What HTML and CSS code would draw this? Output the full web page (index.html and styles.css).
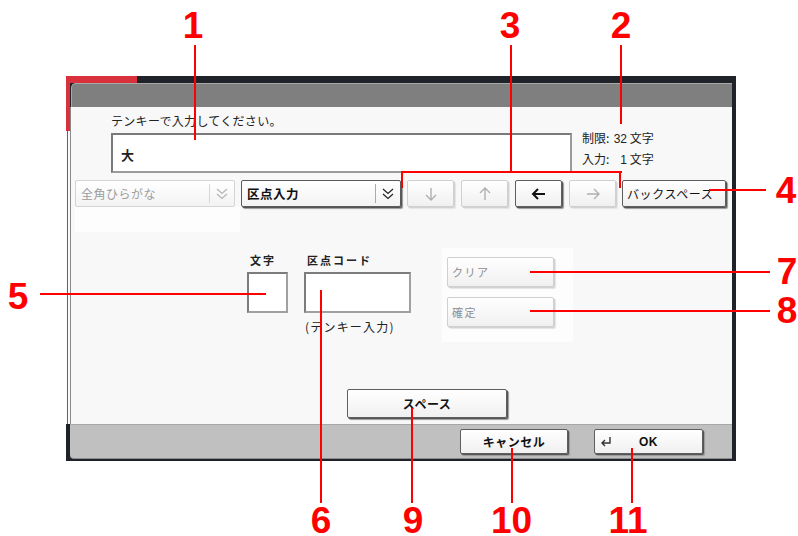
FILE: index.html
```html
<!DOCTYPE html>
<html lang="ja">
<head>
<meta charset="UTF-8" />
<title>区点入力</title>
<link rel="stylesheet" href="styles.css">
</head>
<body>
<div class="page">
  <div class="frame">
    <div class="titlebar"></div>
    <div class="panel">
      <p class="prompt">テンキーで入力してください。</p>
      <div class="entry-row">
        <div class="entry">大</div>
        <div class="limit">
          <div><span class="lbl">制限:</span><span class="num">32</span> 文字</div>
          <div><span class="lbl">入力:</span><span class="num">1</span> 文字</div>
        </div>
      </div>

      <div class="controls">
        <div class="select is-disabled">
          <span class="select-text">全角ひらがな</span>
          <span class="chev"><svg width="14" height="14" viewBox="0 0 14 14"><polyline points="2,2 7,6.5 12,2" /><polyline points="2,7 7,11.5 12,7" /></svg></span>
        </div>
        <div class="select is-active">
          <span class="select-text">区点入力</span>
          <span class="chev"><svg width="14" height="14" viewBox="0 0 14 14"><polyline points="2,2 7,6.5 12,2" /><polyline points="2,7 7,11.5 12,7" /></svg></span>
        </div>
        <button class="btn arrow"><svg width="16" height="16" viewBox="0 0 16 16"><path d="M8 2V14M3 9L8 14L13 9" /></svg></button>
        <button class="btn arrow"><svg width="16" height="16" viewBox="0 0 16 16"><path d="M8 14V2M3 7L8 2L13 7" /></svg></button>
        <button class="btn btn-dark arrow"><svg width="16" height="16" viewBox="0 0 16 16"><path d="M14 8H2M7 3L2 8L7 13" /></svg></button>
        <button class="btn arrow"><svg width="16" height="16" viewBox="0 0 16 16"><path d="M2 8H14M9 3L14 8L9 13" /></svg></button>
        <button class="btn btn-dark backspace">バックスペース</button>
      </div>

      <div class="middle">
        <div class="blank"></div>
        <div class="fields">
          <div class="field">
            <div class="field-label">文字</div>
            <div class="field-box box-char"></div>
          </div>
          <div class="field">
            <div class="field-label">区点コード</div>
            <div class="field-box box-code"></div>
            <div class="field-note">(テンキー入力)</div>
          </div>
        </div>
        <div class="side">
          <button class="btn side-btn">クリア</button>
          <button class="btn side-btn">確定</button>
        </div>
      </div>

      <div class="space-row">
        <button class="btn btn-dark space">スペース</button>
      </div>
    </div>
    <div class="footer">
      <button class="btn btn-dark foot-btn">キャンセル</button>
      <button class="btn btn-dark foot-btn ok">
        <svg class="enter" width="14" height="12" viewBox="0 0 14 12"><path d="M11 1V7H3M6 4L3 7L6 10" /></svg>
        <span>OK</span>
      </button>
    </div>
  </div>

  <!-- callouts -->
  <div class="line l1"></div>
  <div class="line l2"></div>
  <div class="line l3v"></div>
  <div class="line l3h"></div>
  <div class="line l3a"></div>
  <div class="line l3b"></div>
  <div class="line l4"></div>
  <div class="line l5"></div>
  <div class="line l6"></div>
  <div class="line l7"></div>
  <div class="line l8"></div>
  <div class="line l9"></div>
  <div class="line l10"></div>
  <div class="line l11"></div>

  <div class="num-tag n1">1</div>
  <div class="num-tag n2">2</div>
  <div class="num-tag n3">3</div>
  <div class="num-tag n4">4</div>
  <div class="num-tag n5">5</div>
  <div class="num-tag n6">6</div>
  <div class="num-tag n7">7</div>
  <div class="num-tag n8">8</div>
  <div class="num-tag n9">9</div>
  <div class="num-tag n10">10</div>
  <div class="num-tag n11">11</div>
</div>
</body>
</html>
```

FILE: styles.css
```css
* {
  box-sizing: border-box;
}
body {
  margin: 0;
  background: #fff;
  font-family: "Noto Sans CJK JP", "Liberation Sans", sans-serif;
  color: #222;
}
.page {
  position: relative;
  width: 798px;
  height: 536px;
  overflow: hidden;
  padding: 76px 0 0 66px;
}
.frame {
  width: 670px;
  height: 385px;
  padding: 7px 4px 2px 4px;
  background:
    linear-gradient(#d8313b, #d8313b) 0 0 / 71px 7px no-repeat,
    linear-gradient(#d8313b, #d8313b) 0 0 / 4px 55px no-repeat,
    linear-gradient(90deg, #fafafa 1px, #666 1px, #666 2px, #fafafa 2px) 0 55px / 4px 293px no-repeat,
    #1f2229;
}
.titlebar {
  height: 24px;
  margin-left: 1px;
  background: #7f7f7f;
  border-top: 1px solid #a8a8a8;
  border-left: 1px solid #a8a8a8;
  border-top-left-radius: 5px;
}
.panel {
  height: 317px;
  background: #f8f8f8;
  box-shadow: inset 1px 0 0 #8a8a8a;
  padding-top: 6px;
}
.prompt {
  margin: 0 0 0 41px;
  font-size: 12px;
  line-height: 16px;
  letter-spacing: 0.3px;
  color: #222;
}
.entry-row {
  display: flex;
  align-items: flex-start;
  margin-top: 4px;
}
.entry {
  margin-left: 41px;
  width: 461px;
  height: 40px;
  background: #fff;
  border: 2px solid #9a9a9a;
  border-top-color: #7a7a7a;
  border-left-color: #7a7a7a;
  padding: 1px 8px 0;
  font-size: 13px;
  font-weight: bold;
  line-height: 38px;
}
.limit {
  margin: -5px 0 0 10px;
  font-size: 12px;
  line-height: 19px;
  color: #222;
}
.limit .lbl {
  display: inline-block;
  width: 31px;
}
.limit .num {
  display: inline-block;
  width: 14px;
  text-align: right;
  font-family: "Liberation Sans", sans-serif;
  font-size: 12px;
}

/* control row */
.controls {
  display: flex;
  margin-top: 7px;
  padding-left: 5px;
  height: 27px;
}
.select {
  width: 160px;
  height: 27px;
  display: flex;
  align-items: center;
  background: linear-gradient(#ffffff, #f3f3f3);
  border: 1px solid #d4d4d4;
  border-radius: 2px;
  margin-right: 6px;
}
.select-text {
  flex: 1;
  padding-left: 5px;
  font-size: 12px;
  letter-spacing: 0.5px;
}
.chev {
  width: 25px;
  height: 19px;
  display: flex;
  align-items: center;
  justify-content: center;
  border-left: 1px solid #d8d8d8;
}
.chev svg polyline {
  fill: none;
  stroke-width: 1.2;
}
.select.is-disabled .select-text {
  color: #9c9c9c;
}
.select.is-disabled .chev svg polyline {
  stroke: #b4b4b4;
}
.select.is-active {
  border-color: #5a5a5a;
  box-shadow: 1px 1px 0 #555, 2px 2px 1px #9a9a9a;
}
.select.is-active .select-text {
  font-weight: bold;
  font-size: 12.5px;
  color: #111;
}
.select.is-active .chev {
  border-left-color: #aaa;
}
.select.is-active .chev svg polyline {
  stroke: #222;
}

.btn {
  font-family: inherit;
  background: linear-gradient(#ffffff, #f0f0f0);
  border: 1px solid #d0d0d0;
  border-radius: 2px;
  box-shadow: 1px 1px 0 #d2d2d2, 2px 2px 1px #e4e4e4;
  color: #9a9a9a;
  padding: 0;
  cursor: pointer;
}
.btn-dark {
  border-color: #5e5e5e;
  box-shadow: 1px 1px 0 #555, 2px 2px 1px #9a9a9a;
  color: #111;
}
.arrow {
  width: 47px;
  height: 27px;
  margin-right: 7px;
  display: flex;
  align-items: center;
  justify-content: center;
}
.arrow svg path {
  fill: none;
  stroke: #b0b0b0;
  stroke-width: 1.4;
}
.btn-dark.arrow svg path {
  stroke: #111;
  stroke-width: 2;
}
.arrow:nth-last-of-type(2) {
  margin-right: 6px;
}
.backspace {
  width: 104px;
  height: 27px;
  text-align: left;
  padding-left: 4px;
  font-size: 12px;
  letter-spacing: 0.6px;
  white-space: nowrap;
}

/* middle */
.middle {
  display: flex;
  align-items: flex-start;
  padding-left: 5px;
  height: 135px;
}
.blank {
  width: 165px;
  height: 25px;
  background: #fdfdfd;
}
.fields {
  display: flex;
  gap: 16px;
  margin: 46px 0 0 7px;
}
.field-label {
  font-size: 11px;
  font-weight: bold;
  line-height: 14px;
  letter-spacing: 2px;
  padding-left: 3px;
  margin-bottom: 5px;
}
.field-box {
  height: 41px;
  background: #fff;
  border: 2px solid #a0a0a0;
  border-top-color: #7c7c7c;
  border-left-color: #7c7c7c;
}
.box-char {
  width: 41px;
}
.box-code {
  width: 107px;
}
.field-note {
  margin-top: 7px;
  padding-left: 1px;
  font-size: 12px;
  line-height: 14px;
  letter-spacing: 1.2px;
}
.side {
  margin: 41px 0 0 31px;
  width: 131px;
  height: 94px;
  background: #fdfdfd;
  padding: 9px 0 0 5px;
  display: flex;
  flex-direction: column;
  gap: 10px;
}
.side-btn {
  width: 107px;
  height: 30px;
  text-align: left;
  padding-left: 4px;
  font-size: 11px;
  letter-spacing: 1.5px;
  color: #8e8e8e;
}

.space-row {
  margin-top: 47px;
  padding-left: 277px;
}
.space {
  width: 160px;
  height: 29px;
  font-size: 12px;
  font-weight: bold;
  letter-spacing: 0.5px;
}

/* footer */
.footer {
  height: 35px;
  background: #c0c0c0;
  border-top: 1px solid #a8a8a8;
  border-bottom: 1px solid #8c8c8c;
  border-bottom-left-radius: 4px;
  display: flex;
  justify-content: flex-end;
  align-items: center;
  gap: 26px;
  padding-right: 29px;
}
.foot-btn {
  width: 108px;
  height: 25px;
  font-size: 12px;
  font-weight: bold;
  letter-spacing: 0.5px;
}
.ok {
  width: 109px;
  display: flex;
  align-items: center;
  padding-left: 4px;
}
.ok span {
  font-family: "Liberation Sans", sans-serif;
  font-size: 12px;
  margin-left: 26px;
}
.enter path {
  fill: none;
  stroke: #333;
  stroke-width: 1.4;
}

/* callouts */
.line {
  position: absolute;
  background: #f00;
  width: 2px;
  height: 2px;
}
.l1 { left: 194px; top: 45px; height: 95px; }
.l2 { left: 620px; top: 45px; height: 79px; }
.l3v { left: 510px; top: 45px; height: 128px; }
.l3h { left: 401px; top: 171px; width: 221px; }
.l3a { left: 401px; top: 171px; height: 17px; }
.l3b { left: 619px; top: 171px; height: 17px; }
.l4 { left: 709px; top: 189px; width: 57px; }
.l5 { left: 40px; top: 293px; width: 226px; }
.l6 { left: 320px; top: 290px; height: 213px; }
.l7 { left: 530px; top: 271px; width: 240px; }
.l8 { left: 530px; top: 310px; width: 240px; }
.l9 { left: 411px; top: 408px; height: 95px; }
.l10 { left: 511px; top: 448px; height: 55px; }
.l11 { left: 631px; top: 448px; height: 55px; }

.num-tag {
  position: absolute;
  width: 40px;
  text-align: center;
  font-family: "Liberation Sans", Arial, sans-serif;
  font-weight: bold;
  font-size: 37px;
  line-height: 28px;
  color: #f00;
}
.n1 { left: 173px; top: 12px; }
.n2 { left: 601px; top: 12px; }
.n3 { left: 490px; top: 12px; }
.n4 { left: 766px; top: 177px; }
.n5 { left: -2px; top: 283px; }
.n6 { left: 301px; top: 507px; }
.n7 { left: 767px; top: 258px; }
.n8 { left: 767px; top: 297px; }
.n9 { left: 393px; top: 507px; }
.n10 { left: 491px; top: 507px; }
.n11 { left: 608px; top: 507px; }
```
